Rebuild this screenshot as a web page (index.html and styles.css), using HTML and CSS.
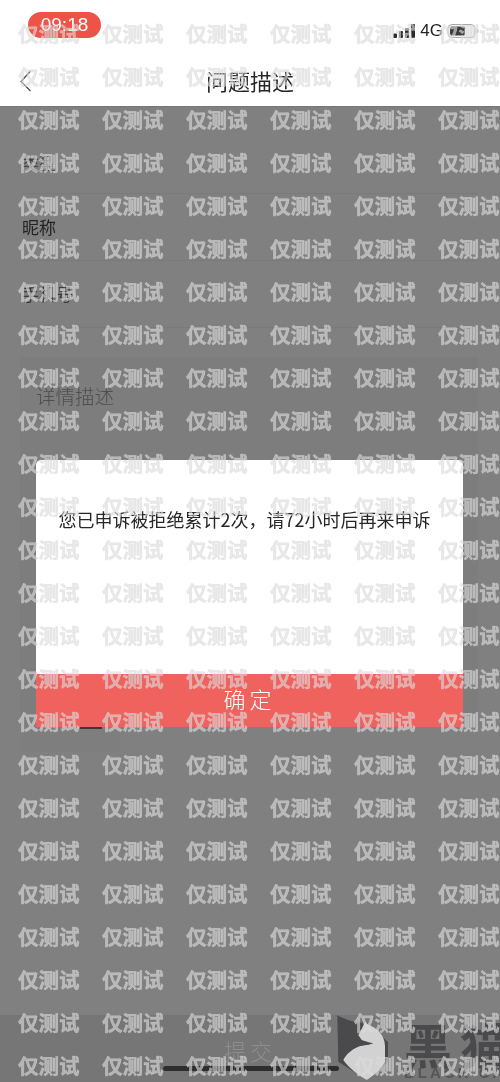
FILE: index.html
```html
<!DOCTYPE html>
<html lang="zh">
<head>
<meta charset="utf-8">
<title>问题描述</title>
<link rel="stylesheet" href="styles.css">
</head>
<body>
<div class="page">
  <header class="top">
    <div class="status">
      <span class="time">09:18</span>
      <div class="status-right">
        <svg class="signal" viewBox="0 0 23 15" width="23" height="15"><rect x="0" y="9.500" width="4" height="4.500" rx="1"/><rect x="6" y="7" width="4" height="7" rx="1"/><rect x="12" y="4" width="4" height="10" rx="1"/><rect x="18" y="0" width="4" height="14" rx="1"/></svg>
        <span class="net">4G</span>
        <svg class="battery" viewBox="0 0 33 16" width="33" height="16"><rect x="1" y="1.500" width="27" height="13" rx="4" fill="#f6f6f6" stroke="#aaa"/><rect x="3" y="3.500" width="15" height="9" rx="1.500" fill="#3c3c3c"/><rect x="29.500" y="6" width="2" height="4" rx="1" fill="#bbb"/></svg>
      </div>
    </div>
    <nav class="nav">
      <svg class="back" viewBox="0 0 14 24" width="14" height="24"><path d="M11.500 2 2 12.500 11.500 22" fill="none" stroke="#444" stroke-width="1.200"/></svg>
      <h1 class="title">问题描述</h1>
    </nav>
  </header>

  <main class="form">
    <div class="row row-type">类型</div>
    <div class="row row-name">昵称</div>
    <div class="row row-phone">手机号</div>
    <div class="details">详情描述</div>
    <div class="thumb"><span class="thumb-text"></span></div>
  </main>

  <footer class="bottom">
    <span class="submit">提交</span>
    <span class="home"></span>
  </footer>

  <section class="modal">
    <p class="message">您已申诉被拒绝累计2次，请72小时后再来申诉</p>
    <button class="confirm">确定</button>
  </section>

  <div class="logo">
    <svg class="cat" viewBox="0 0 54 68" width="54" height="68"><path d="M0.300 1C8 6 20 9 30 9L51 28V48L29.700 66 1.300 47.700Z" fill="#4a4a4c"/><path d="M26 12 28 7.700 31 10.500C38 13 48 20 48 32V47.700C44 55 36 62 29.700 66 22 62 12 54 6.300 46 10 39 16 35 21.300 32.700 27 31 33 31 36.300 29.300 31 28 27 27 24.700 26L21.300 21C23 18 25 15 26 12Z" fill="#d2d2d2"/></svg>
    <div class="logo-text"><span class="logo-cn">黑猫</span><span class="logo-en">BLACK CAT</span></div>
  </div>

  <div class="marks" id="marks"></div>
</div>
<script src="marks.js"></script>
</body>
</html>
```
FILE: marks.js
```js
var box = document.getElementById('marks');
for (var i = 0; i < 150; i++) {
  var s = document.createElement('span');
  s.textContent = '仅测试';
  box.appendChild(s);
}
```
FILE: styles.css
```css
* { box-sizing: border-box; }
html, body { margin: 0; padding: 0; }
body { width: 500px; height: 1082px; overflow: hidden; background: #808080; font-family: "Noto Sans CJK SC", "Liberation Sans", sans-serif; }
.page { position: relative; width: 500px; height: 1082px; background: #808080; overflow: hidden; display: flex; flex-direction: column; filter: blur(.45px); }

.top { height: 107px; background: #fff; flex: none; border-bottom: 1px solid #777; }
.status { height: 50px; padding: 12px 0 0 28px; display: flex; justify-content: space-between; align-items: flex-start; }
.time { width: 73px; height: 26px; border-radius: 13px; background: #ee5348; color: #fff; font: 400 19px/26px "Liberation Sans", sans-serif; text-align: center; }
.status-right { display: flex; align-items: center; gap: 4px; padding: 10px 20px 0 0; }
.signal { fill: #2b2b2b; margin-right: 0; }
.net { font: 400 17px/18px "Liberation Sans", sans-serif; color: #222; }
.nav { position: relative; display: flex; justify-content: center; padding-top: 14px; }
.back { position: absolute; left: 19px; top: 19px; }
.title { margin: 0; font-size: 22px; line-height: 32px; font-weight: 400; color: #262626; }

.form { flex: 1; padding: 0 22px; }
.row { font-size: 17px; line-height: 24px; color: #333; border-bottom: 1px solid #7a7a7a; }
.row-type { height: 87px; padding-top: 44px; color: #444; }
.row-name { height: 67px; padding-top: 21px; color: #222; }
.row-phone { height: 67px; padding-top: 21px; color: #3a3a3a; }
.details { margin: 29px 0 0 -2px; width: 458px; height: 370px; background: #7d7d7d; padding: 24px 16px; font-size: 19.500px; line-height: 30px; font-weight: 300; color: #4e4e4e; }
.thumb { margin: 0 0 0 -2px; width: 100px; height: 25px; background: #7e7e7e; }
.thumb-text { display: block; margin-left: 60px; width: 22px; height: 2px; background: #3a3a3a; }

.bottom { position: relative; flex: none; height: 67px; background: #767676; display: flex; justify-content: center; padding: 20px 0 0 0; }
.submit { font-size: 22px; line-height: 30px; letter-spacing: 4px; color: #8e8e8e; font-weight: 300; }
.home { position: absolute; left: 163px; top: 51px; width: 176px; height: 5px; border-radius: 3px; background: #2e2e2e; }

.modal { position: absolute; left: 36px; top: 460px; width: 427px; height: 267px; background: #fff; border-radius: 5px 5px 0 0; overflow: hidden; display: flex; flex-direction: column; }
.message { margin: 0; flex: 1; padding: 46px 10px 0 0; text-align: center; font-size: 18px; line-height: 26px; font-weight: 400; color: #262626; white-space: nowrap; }
.confirm { flex: none; height: 53px; width: 100%; border: 0; padding: 0 0 6px; background: #f0625d; color: #fff; font-family: inherit; font-size: 22px; letter-spacing: 4px; font-weight: 300; }

.logo { position: absolute; left: 337px; top: 1014px; display: flex; gap: 13px; }
.logo-text { display: flex; flex-direction: column; padding-top: 6px; }
.logo-cn { font-size: 48px; line-height: 46px; font-weight: 700; letter-spacing: 8px; color: #4a4a4c; white-space: nowrap; }
.logo-en { font: 700 15px/14px "Liberation Sans", sans-serif; letter-spacing: 3px; color: #555; white-space: nowrap; }

.marks { position: absolute; left: 18px; top: 12px; width: 504px; display: grid; grid-template-columns: repeat(6, 84px); grid-auto-rows: 43px; pointer-events: none; }
.marks span { font-size: 20.500px; line-height: 43px; font-weight: 700; white-space: nowrap; -webkit-text-stroke: .6px rgba(219, 219, 219, .5); color: rgba(219, 219, 219, .62); }
```
